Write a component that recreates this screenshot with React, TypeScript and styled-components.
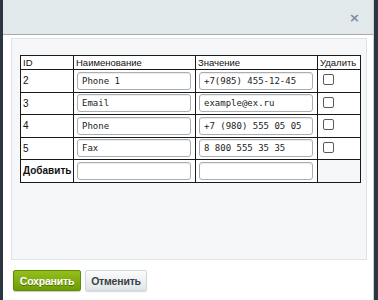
import React from 'react';
import { styled, createGlobalStyle } from 'styled-components';

const GlobalStyle = createGlobalStyle`
    html, body {
        margin: 0;
        padding: 0;
        background: #2c3640;
        font-family: "Liberation Sans", Arial, sans-serif;
    }
`;

const rows = [
    { id: '2', name: 'Phone 1', value: '+7(985) 455-12-45' },
    { id: '3', name: 'Email', value: 'example@ex.ru' },
    { id: '4', name: 'Phone', value: '+7 (980) 555 05 05' },
    { id: '5', name: 'Fax', value: '8 800 555 35 35' },
];

export default function App() {
    return (
        <>
            <GlobalStyle />
            <Dialog>
                <Header>
                    <Close>×</Close>
                </Header>
                <Panel>
                    <Table>
                        <colgroup>
                            <col style={{ width: 53 }} />
                            <col style={{ width: 122 }} />
                            <col style={{ width: 122 }} />
                            <col style={{ width: 43 }} />
                        </colgroup>
                        <thead>
                            <tr>
                                <Th>ID</Th>
                                <Th>Наименование</Th>
                                <Th>Значение</Th>
                                <Th>Удалить</Th>
                            </tr>
                        </thead>
                        <tbody>
                            {rows.map((r) => (
                                <tr key={r.id}>
                                    <Td>{r.id}</Td>
                                    <Td>
                                        <Field defaultValue={r.name} />
                                    </Td>
                                    <Td>
                                        <Field defaultValue={r.value} />
                                    </Td>
                                    <Td>
                                        <Check />
                                    </Td>
                                </tr>
                            ))}
                            <tr>
                                <Td $bold>Добавить</Td>
                                <Td>
                                    <Field />
                                </Td>
                                <Td>
                                    <Field />
                                </Td>
                                <Td $empty />
                            </tr>
                        </tbody>
                    </Table>
                </Panel>
                <Footer>
                    <SaveButton>Сохранить</SaveButton>
                    <CancelButton>Отменить</CancelButton>
                </Footer>
            </Dialog>
        </>
    );
}

const Dialog = styled.div`
    margin-left: 3px;
    width: 371px;
    height: 300px;
    background: #fff;
    border-right: 1px solid #c9d0d3;
    box-sizing: border-box;
    display: flex;
    flex-direction: column;
`;

const Header = styled.div`
    height: 34px;
    flex-shrink: 0;
    background: #e1e9eb;
    border-bottom: 1px solid #a5acaf;
    display: flex;
    align-items: center;
    justify-content: flex-end;
    padding-right: 13px;
`;

const Close = styled.span`
    font-family: "DejaVu Sans", sans-serif;
    font-size: 13px;
    font-weight: bold;
    color: #7b8b9a;
    line-height: 1;
`;

const Panel = styled.div`
    margin: 3px 0 0 8px;
    width: 356px;
    height: 222px;
    box-sizing: border-box;
    background: #f5f7f8;
    border: 1px solid #dde4e6;
    padding: 16px 0 0 8px;
`;

const Table = styled.table`
    border-collapse: collapse;
    width: 340px;
    table-layout: fixed;
    font-size: 10px;
    color: #111;
`;

const Th = styled.th`
    height: 13px;
    border: 1px solid #1a1a1a;
    background: #fff;
    font-size: 9.5px;
    font-weight: normal;
    text-align: left;
    padding: 0 2px;
    white-space: nowrap;
    overflow: hidden;
`;

const Td = styled.td<{ $bold?: boolean; $empty?: boolean }>`
    height: 19.5px;
    border: 1px solid #1a1a1a;
    background: ${(p) => (p.$empty ? 'transparent' : '#fff')};
    font-weight: ${(p) => (p.$bold ? 'bold' : 'normal')};
    padding: 1px 3px 1px 2px;
    vertical-align: middle;
    white-space: nowrap;
    overflow: hidden;
`;

const Field = styled.input`
    display: block;
    width: 114px;
    height: 18px;
    margin-left: 1px;
    box-sizing: border-box;
    border: 1px solid #a7afb4;
    border-radius: 3px;
    box-shadow: inset 0 1px 1px rgba(0, 0, 0, 0.08);
    background: #fff;
    padding: 0 4px;
    font-family: "DejaVu Sans Mono", monospace;
    font-size: 9px;
    color: #222;
    outline: none;
`;

const Check = styled.span`
    display: block;
    width: 9px;
    height: 9px;
    margin: 0 0 2px 3px;
    border: 1px solid #5a5a5a;
    border-radius: 2px;
    background: #fff;
`;

const Footer = styled.div`
    display: flex;
    gap: 4px;
    padding: 10px 0 0 10px;
`;

const SaveButton = styled.button`
    width: 68px;
    height: 21px;
    border: 1px solid #5f8c02;
    border-radius: 2px;
    background: linear-gradient(#93bf1d, #6e9c03);
    color: #fff;
    font-family: "Liberation Sans", Arial, sans-serif;
    font-weight: bold;
    font-size: 10.5px;
    letter-spacing: -0.2px;
    text-shadow: 0 1px 0 rgba(0, 0, 0, 0.35);
    box-shadow: 0 1px 1px rgba(0, 0, 0, 0.2);
    padding: 0;
`;

const CancelButton = styled.button`
    width: 62px;
    height: 21px;
    border: 1px solid #d1d8db;
    border-radius: 2px;
    background: linear-gradient(#fbfcfc, #dfe5e8);
    color: #3a3f43;
    font-family: "Liberation Sans", Arial, sans-serif;
    font-weight: bold;
    font-size: 10.5px;
    letter-spacing: -0.2px;
    box-shadow: 0 1px 1px rgba(0, 0, 0, 0.15);
    padding: 0;
`;
